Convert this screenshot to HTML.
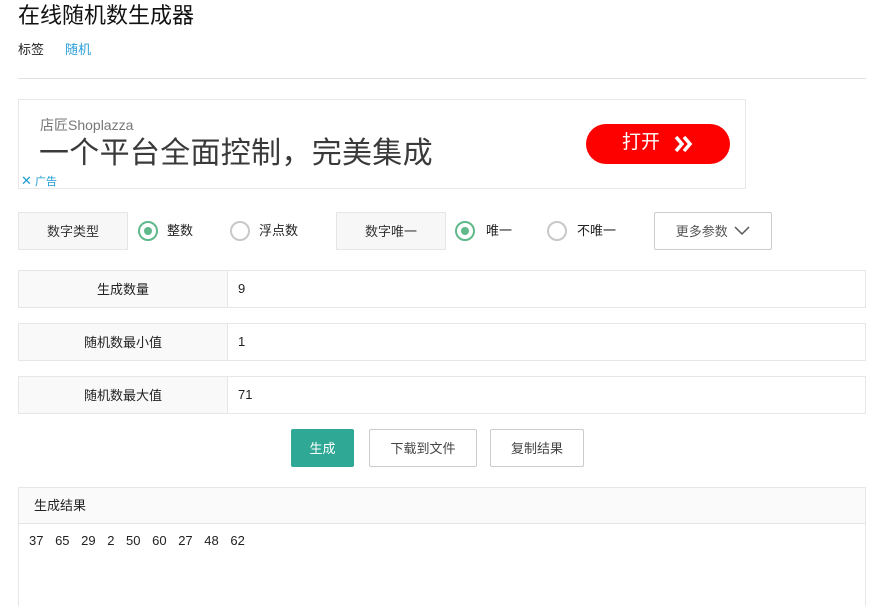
<!DOCTYPE html>
<html><head><meta charset="utf-8"><style>
*{margin:0;padding:0;box-sizing:border-box}
html,body{width:870px;height:606px;overflow:hidden}
body{background:#fff;font-family:"Liberation Sans","Noto Sans CJK SC",sans-serif;color:#222;position:relative;font-size:13px}
.a{position:absolute}
.lab{position:absolute;background:#f7f7f7;border:1px solid #e6e6e6;text-align:center;font-size:13px;color:#333;line-height:37px}
.radio{position:absolute;width:20px;height:20px;border-radius:50%;border:2px solid #c8c8c8}
.radio.on{border-color:#5fb98a}
.radio.on::after{content:"";position:absolute;left:4px;top:4px;width:8px;height:8px;border-radius:50%;background:#5fb98a}
.rt{position:absolute;font-size:13px;color:#222;line-height:16px}
.row{position:absolute;left:18px;width:848px;height:38px;border:1px solid #e6e6e6}
.row .l{position:absolute;left:0;top:0;width:209px;height:36px;background:#f9f9f9;border-right:1px solid #e6e6e6;text-align:center;line-height:38px;color:#222}
.row .v{position:absolute;left:219px;top:0;line-height:36px;color:#222}
.btn{position:absolute;top:429px;height:38px;border:1px solid #ccc;border-radius:2px;text-align:center;line-height:37px;color:#444;background:#fff}
</style></head><body>
<div class="a" style="left:18px;top:2px;font-size:22px;line-height:28px;color:#111">在线随机数生成器</div>
<div class="a" style="left:18px;top:42px;font-size:13px;line-height:16px">标签</div>
<div class="a" style="left:65px;top:42px;font-size:13px;line-height:16px;color:#2a9fd6">随机</div>
<div class="a" style="left:18px;top:78px;width:848px;height:1px;background:#e2e2e2"></div>

<div class="a" style="left:18px;top:99px;width:728px;height:90px;border:1px solid #e8e8e8"></div>
<div class="a" style="left:40px;top:116px;font-size:14px;line-height:18px;color:#777">店匠Shoplazza</div>
<div class="a" style="left:39px;top:136px;font-size:30px;line-height:36px;color:#3a3a3a;letter-spacing:0.3px">一个平台全面控制，完美集成</div>
<div class="a" style="left:21px;top:174px;font-size:11px;line-height:14px;color:#1a9bd0"><b style="font-size:13px;font-weight:normal">✕</b> 广告</div>
<div class="a" style="left:586px;top:124px;width:144px;height:40px;border-radius:20px;background:#fd0000;color:#fff;font-size:19px;line-height:38px;padding-left:36px">打开<svg width="20" height="16" viewBox="0 0 20 16" style="position:absolute;left:88px;top:12px"><path d="M2 1 L8 8 L2 15 M10 1 L16 8 L10 15" fill="none" stroke="#fff" stroke-width="3.5"/></svg></div>

<div class="lab" style="left:18px;top:212px;width:110px;height:38px">数字类型</div>
<div class="radio on" style="left:138px;top:221px"></div><div class="rt" style="left:167px;top:223px">整数</div>
<div class="radio" style="left:230px;top:221px"></div><div class="rt" style="left:259px;top:223px">浮点数</div>
<div class="lab" style="left:336px;top:212px;width:110px;height:38px">数字唯一</div>
<div class="radio on" style="left:455px;top:221px"></div><div class="rt" style="left:486px;top:223px">唯一</div>
<div class="radio" style="left:547px;top:221px"></div><div class="rt" style="left:577px;top:223px">不唯一</div>
<div class="btn" style="left:654px;top:212px;width:118px;color:#555">更多参数 <svg width="16" height="10" style="margin-left:3px" viewBox="0 0 16 10"><path d="M1 1 L8 8 L15 1" fill="none" stroke="#555" stroke-width="1.5"/></svg></div>

<div class="row" style="top:270px"><div class="l">生成数量</div><div class="v">9</div></div>
<div class="row" style="top:323px"><div class="l">随机数最小值</div><div class="v">1</div></div>
<div class="row" style="top:376px"><div class="l">随机数最大值</div><div class="v">71</div></div>

<div class="btn" style="left:291px;width:63px;background:#2fa896;border-color:#2fa896;color:#fff">生成</div>
<div class="btn" style="left:369px;width:108px">下载到文件</div>
<div class="btn" style="left:490px;width:94px">复制结果</div>

<div class="a" style="left:18px;top:487px;width:848px;height:140px;border:1px solid #e6e6e6"></div>
<div class="a" style="left:19px;top:488px;width:846px;height:36px;background:#fafafa;border-bottom:1px solid #e6e6e6"></div>
<div class="a" style="left:34px;top:498px;line-height:16px">生成结果</div>
<div class="a" style="left:29px;top:533px;line-height:16px;word-spacing:8px">37 65 29 2 50 60 27 48 62</div>
</body></html>
